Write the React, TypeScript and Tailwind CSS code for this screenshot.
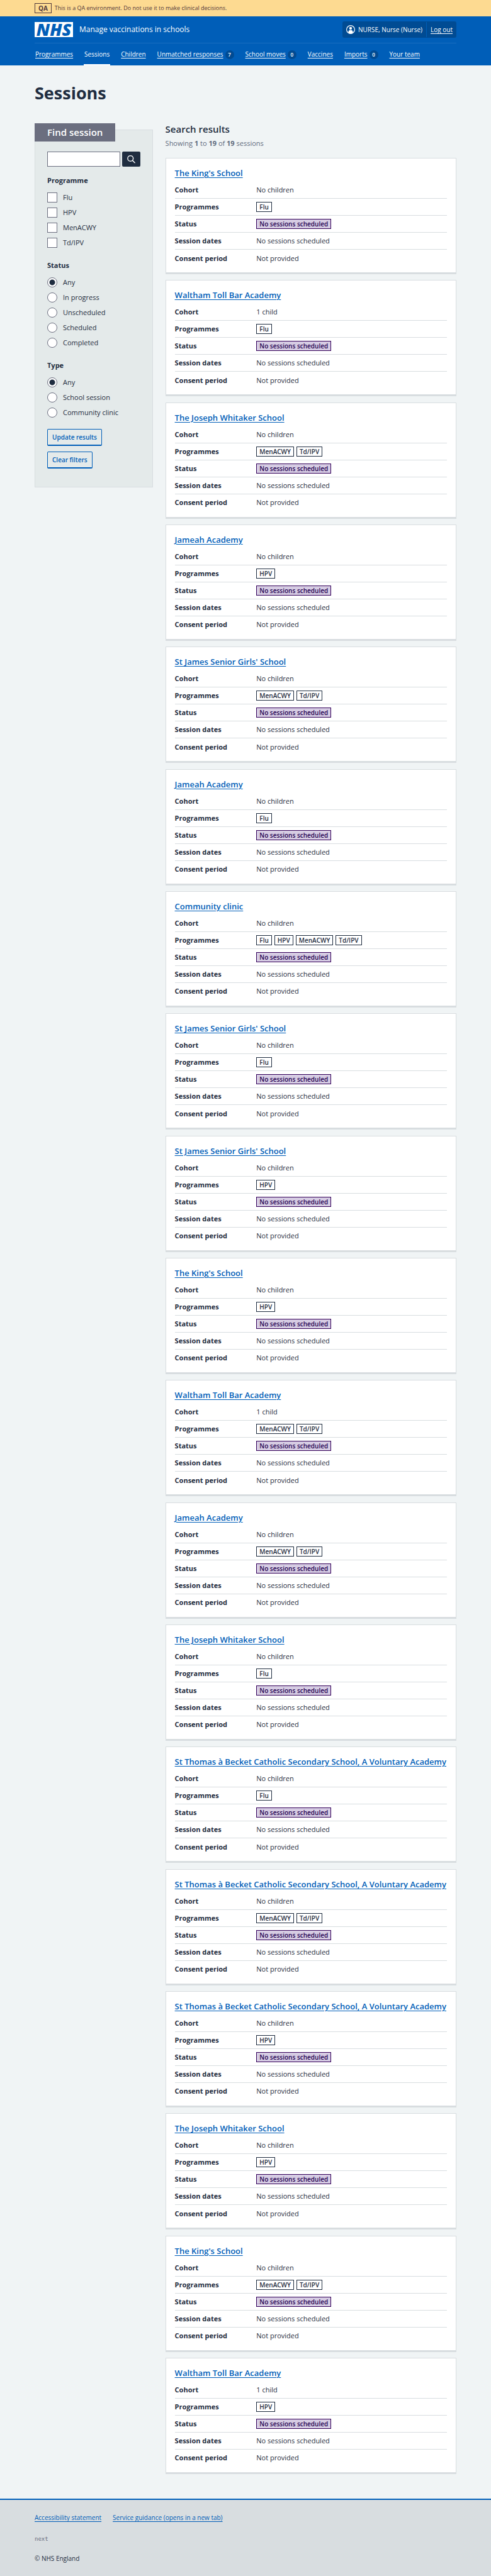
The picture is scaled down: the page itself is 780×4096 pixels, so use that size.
import React from "react";

type Programme = "Flu" | "HPV" | "MenACWY" | "Td/IPV";

interface Session {
  name: string;
  cohort: string;
  programmes: Programme[];
}

const none = "No children";
const stJames = "St James Senior Girls' School";
const stThomas = "St Thomas à Becket Catholic Secondary School, A Voluntary Academy";

const sessions: Session[] = [
  { name: "The King's School", cohort: none, programmes: ["Flu"] },
  { name: "Waltham Toll Bar Academy", cohort: "1 child", programmes: ["Flu"] },
  { name: "The Joseph Whitaker School", cohort: none, programmes: ["MenACWY", "Td/IPV"] },
  { name: "Jameah Academy", cohort: none, programmes: ["HPV"] },
  { name: stJames, cohort: none, programmes: ["MenACWY", "Td/IPV"] },
  { name: "Jameah Academy", cohort: none, programmes: ["Flu"] },
  { name: "Community clinic", cohort: none, programmes: ["Flu", "HPV", "MenACWY", "Td/IPV"] },
  { name: stJames, cohort: none, programmes: ["Flu"] },
  { name: stJames, cohort: none, programmes: ["HPV"] },
  { name: "The King's School", cohort: none, programmes: ["HPV"] },
  { name: "Waltham Toll Bar Academy", cohort: "1 child", programmes: ["MenACWY", "Td/IPV"] },
  { name: "Jameah Academy", cohort: none, programmes: ["MenACWY", "Td/IPV"] },
  { name: "The Joseph Whitaker School", cohort: none, programmes: ["Flu"] },
  { name: stThomas, cohort: none, programmes: ["Flu"] },
  { name: stThomas, cohort: none, programmes: ["MenACWY", "Td/IPV"] },
  { name: stThomas, cohort: none, programmes: ["HPV"] },
  { name: "The Joseph Whitaker School", cohort: none, programmes: ["HPV"] },
  { name: "The King's School", cohort: none, programmes: ["MenACWY", "Td/IPV"] },
  { name: "Waltham Toll Bar Academy", cohort: "1 child", programmes: ["HPV"] },
];

const navItems: { label: string; count?: number; current?: boolean }[] = [
  { label: "Programmes" },
  { label: "Sessions", current: true },
  { label: "Children" },
  { label: "Unmatched responses", count: 7 },
  { label: "School moves", count: 0 },
  { label: "Vaccines" },
  { label: "Imports", count: 0 },
  { label: "Your team" },
];

function Banner() {
  return (
    <div className="flex h-[26px] items-center gap-[5px] bg-[#fdda91] px-[55px] text-[#51383c]">
      <strong className="border border-[#51383c] px-[5px] text-[10px] leading-[14px]">QA</strong>
      <span className="text-[9px] leading-[14px]">
        This is a QA environment. Do not use it to make clinical decisions.
      </span>
    </div>
  );
}

function Header() {
  return (
    <header className="bg-[#005eb8] px-[55px] text-white">
      <div className="flex h-[43px] items-center border-b border-[#1a6ebf]">
        <a href="#home" className="flex items-center gap-[10px]">
          <span className="flex h-6 w-[61px] items-center justify-center bg-white text-[27px] leading-6 font-extrabold text-[#005eb8] italic">
            NHS
          </span>
          <span className="text-[12px] leading-[18px]">Manage vaccinations in schools</span>
        </a>
        <div className="ml-auto flex h-[26px] items-stretch rounded-[3px] bg-[#004b93] text-[10px] leading-[26px]">
          <span className="flex items-center gap-[5px] px-[6px]">
            <svg viewBox="0 0 24 24" className="size-[14px]" aria-hidden="true">
              <circle cx="12" cy="12" r="11" fill="none" stroke="currentColor" strokeWidth="2" />
              <circle cx="12" cy="8.6" r="3.8" fill="currentColor" />
              <path d="M6 22v-3.5a6 5.2 0 0 1 12 0V22a12 12 0 0 1-12 0Z" fill="currentColor" />
            </svg>
            NURSE, Nurse (Nurse)
          </span>
          <a href="#logout" className="my-px border-l border-[#005eb8] px-[6px] leading-[24px] underline underline-offset-2">
            Log out
          </a>
        </div>
      </div>
      <nav aria-label="Menu" className="flex h-[35px] gap-4 text-[10px]">
        {navItems.map((item) => (
          <a
            key={item.label}
            href="#nav"
            className={
              item.current
                ? "flex items-center gap-[3px] border-b-2 border-white px-px pt-[2px]"
                : "flex items-center gap-[3px] px-px"
            }
          >
            <span className={item.current ? "" : "underline underline-offset-2"}>{item.label}</span>
            {item.count !== undefined && (
              <span className="flex size-[14px] items-center justify-center rounded-full bg-[#004b93] text-[8px] font-semibold">
                {item.count}
              </span>
            )}
          </a>
        ))}
      </nav>
    </header>
  );
}

function Choice({ type, name, label, checked }: { type: "checkbox" | "radio"; name: string; label: string; checked?: boolean }) {
  return (
    <label className="flex h-6 items-center gap-[9px] text-[11px] leading-[18px]">
      <input
        type={type}
        name={name}
        defaultChecked={checked}
        className={
          type === "radio"
            ? "size-4 appearance-none rounded-full border border-[#6b6e7f] bg-white checked:bg-[radial-gradient(circle,#1f2d40_4px,white_5px)]"
            : "size-4 appearance-none border border-[#6b6e7f] bg-white checked:bg-[#1f2d40]"
        }
      />
      {label}
    </label>
  );
}

function Group({ title, type, options, selected }: { title: string; type: "checkbox" | "radio"; options: string[]; selected?: string }) {
  return (
    <fieldset>
      <legend className="mb-[6px] text-[11px] leading-[18px] font-bold">{title}</legend>
      {options.map((o) => (
        <Choice key={o} type={type} name={title} label={o} checked={o === selected} />
      ))}
    </fieldset>
  );
}

const secondary =
  "rounded-[2px] border border-b-2 border-[#005eb8] px-[7px] text-[10px] leading-6 font-semibold text-[#005eb8]";

function Filters() {
  return (
    <aside className="mt-[11px] self-start border border-[#d8dde0] bg-[#e4eaea] px-[19px] pb-[29px]">
      <h2 className="-mt-[11px] -ml-5 w-fit bg-[#6b6e7f] px-5 text-[15px] leading-[29px] font-semibold text-white">
        Find session
      </h2>
      <form onSubmit={(e) => e.preventDefault()}>
        <div className="mt-4 flex gap-[3px]">
          <input type="search" aria-label="Search" className="h-6 min-w-0 flex-1 border border-[#6b6e7f] bg-white px-1 text-[11px]" />
          <button type="submit" aria-label="Search" className="flex h-6 w-[29px] items-center justify-center rounded-[2px] bg-[#1f2d40] text-white">
            <svg viewBox="0 0 24 24" className="size-[15px]" fill="none" stroke="currentColor" strokeWidth="2.2" strokeLinecap="round" aria-hidden="true">
              <circle cx="10" cy="9.5" r="7" />
              <path d="m15.2 14.7 5.8 5.8" />
            </svg>
          </button>
        </div>
        <div className="mt-[13px] flex flex-col gap-[15px]">
          <Group title="Programme" type="checkbox" options={["Flu", "HPV", "MenACWY", "Td/IPV"]} />
          <Group title="Status" type="radio" selected="Any" options={["Any", "In progress", "Unscheduled", "Scheduled", "Completed"]} />
          <Group title="Type" type="radio" selected="Any" options={["Any", "School session", "Community clinic"]} />
        </div>
        <div className="mt-[14px] flex flex-col items-start gap-[9px]">
          <button type="submit" className={secondary}>Update results</button>
          <button type="reset" className={secondary}>Clear filters</button>
        </div>
      </form>
    </aside>
  );
}

function Row({ term, last, children }: { term: string; last?: boolean; children: React.ReactNode }) {
  return (
    <div className={last ? "flex h-[27px] items-center" : "flex h-[27px] items-center border-b border-[#d8dde0]"}>
      <dt className="w-[30%] font-bold">{term}</dt>
      <dd className="flex flex-1 gap-1">{children}</dd>
    </div>
  );
}

function Card({ session }: { session: Session }) {
  return (
    <li className="border border-b-[3px] border-[#d8dde0] bg-white px-[14px] pt-[13px] pb-[9px]">
      <h3 className="text-[13px] leading-5 font-semibold whitespace-nowrap">
        <a href="#session" className="text-[#005eb8] underline decoration-1 underline-offset-2">
          {session.name}
        </a>
      </h3>
      <dl className="mt-1 text-[11px] leading-[18px]">
        <Row term="Cohort">{session.cohort}</Row>
        <Row term="Programmes">
          {session.programmes.map((p) => (
            <strong key={p} className="border border-[#1f2d40] px-1 text-[10px] leading-[14px] font-semibold">{p}</strong>
          ))}
        </Row>
        <Row term="Status">
          <strong className="border border-[#330059] bg-[#d6cce3] px-1 text-[10px] leading-[14px] font-semibold text-[#240050]">
            No sessions scheduled
          </strong>
        </Row>
        <Row term="Session dates">No sessions scheduled</Row>
        <Row term="Consent period" last>Not provided</Row>
      </dl>
    </li>
  );
}

export default function App() {
  return (
    <div className="flex min-h-screen flex-col bg-[#f0f4f5] font-['Open_Sans',sans-serif] text-[#1f2d40]">
      <Banner />
      <Header />
      <main className="flex flex-1 flex-col px-[55px] pt-[26px] pb-[39px]">
        <h1 className="mb-[29px] text-[27px] leading-9 font-bold">Sessions</h1>
        <div className="grid flex-1 grid-cols-[28%_1fr] gap-5">
          <Filters />
          <section className="flex flex-col">
            <h2 className="text-[15px] leading-5 font-semibold">Search results</h2>
            <p className="mt-1 mb-[14px] text-[11px] leading-[18px] text-[#5f6b7d]">
              Showing <b>1</b> to <b>19</b> of <b>19</b> sessions
            </p>
            <ul className="flex flex-1 flex-col justify-between">
              {sessions.map((s, i) => (
                <Card key={i} session={s} />
              ))}
            </ul>
          </section>
        </div>
      </main>
      <footer className="border-t-2 border-[#005eb8] bg-[#d8dde0] px-[55px] py-5 text-[10px] leading-4">
        <ul className="flex gap-[18px] text-[#005eb8] underline underline-offset-2">
          <li><a href="#accessibility">Accessibility statement</a></li>
          <li><a href="#guidance">Service guidance (opens in a new tab)</a></li>
        </ul>
        <p className="mt-[18px] font-['DejaVu_Sans_Mono',monospace] text-[9px] text-[#6b6e7f]">next</p>
        <p className="mt-[15px]">© NHS England</p>
      </footer>
    </div>
  );
}
